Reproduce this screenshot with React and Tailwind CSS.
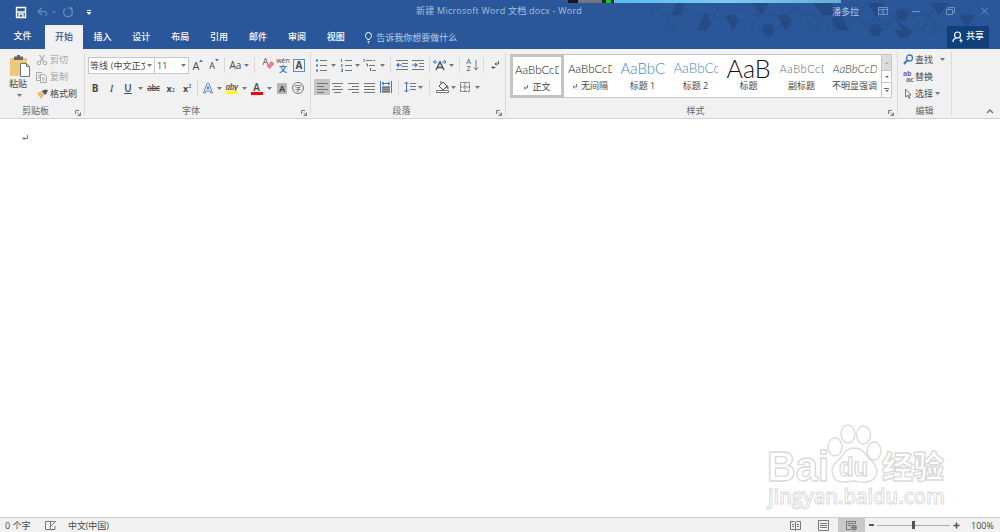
import clsx from 'clsx';

const tabs = ['插入', '设计', '布局', '引用', '邮件', '审阅', '视图'];

const styles = [
  { name: '标题 1', sample: 'AaBbC', className: 'text-[15px] text-[#4a86c0]', len: 44 },
  { name: '标题 2', sample: 'AaBbCc', className: 'text-[13.500px] text-[#4a86c0]', len: 44 },
  { name: '标题', sample: 'AaB', className: 'text-[25px] text-[#111]', len: 44 },
  { name: '副标题', sample: 'AaBbCcD', className: 'text-[11px] tracking-[0.6px] text-[#666]', len: 44 },
  { name: '不明显强调', sample: 'AaBbCcD', className: 'text-[11.500px] italic text-[#333]', len: 44 },
];

function Icon({ w = 16, h = 16, className, children }) {
  return (
    <svg
      width={w}
      height={h}
      viewBox={`0 0 ${w} ${h}`}
      className={clsx('shrink-0', className)}
      fill="none"
      stroke="#777"
      strokeWidth="1"
    >
      {children}
    </svg>
  );
}

function Slot({ className, children }) {
  return (
    <div className={clsx('flex h-4 shrink-0 items-center justify-center whitespace-nowrap', className)}>
      {children}
    </div>
  );
}

function Arrow({ className = 'w-2' }) {
  return (
    <Slot className={className}>
      <svg width="5" height="3" viewBox="0 0 5 3" className="shrink-0">
        <path d="M0 0h5L2.5 3z" fill="#777" />
      </svg>
    </Slot>
  );
}

function Sep({ className = 'w-2' }) {
  return (
    <Slot className={className}>
      <div className="h-4 w-px bg-[#d8d8d8]" />
    </Slot>
  );
}

function Group({ label, launcher, className, children }) {
  return (
    <div className={clsx('flex h-[69px] shrink-0 flex-col', className)}>
      <div className="h-[54px]">{children}</div>
      <div
        className={clsx(
          'relative flex h-[15px] items-center justify-center text-[9px] text-[#666]',
          launcher && 'pr-[13px]'
        )}
      >
        {label}
        {launcher && (
          <Icon w={6} h={6} className="absolute right-[3px] bottom-[2px]">
            <path d="M.5 4V.5H4M2.5 2.5l2.5 2.5M5.5 2.5v3h-3" />
          </Icon>
        )}
      </div>
    </div>
  );
}

function Divider() {
  return <div className="mt-[3px] h-[63px] w-px shrink-0 bg-[#dadada]" />;
}

function Lines({ d }) {
  return (
    <Icon w={12} h={12}>
      <path d={d} />
    </Icon>
  );
}

function TitlePattern() {
  return (
    <svg
      width="360"
      height="49"
      viewBox="640 0 360 49"
      className="absolute top-0 right-0"
      fill="none"
      stroke="#264f8c"
      strokeWidth="1"
    >
      <path d="M646 3l7 12 8-12M675 15h-9l9 15h-9M672 15l-6 9 4 6h8l-5-10M698 15h17l-9 15h-9l9-18M715 15l5-9M725 15l8 15 9-15M751 15h9l-9 15h9l8-8M760 15l-9-12M768 15h18l-9 15M777 3l9 12 9-9 9 9h18l9-12 9 12h18l9-12 9 12h18l9-12 9 12h18l9-12 9 12h18l9-12 9 12" />
      <path d="M804 15l9 14M822 15l-9 15-9-15M831 3l-9 12 9 15 9-15M831 30h18l9-15 9 15h18l9-15 9 15h18l9-15 9 15h18l9-15 9 15h18M849 30l-9-15M867 30l-9-15-9 15M885 30l-9-15-9 15M921 30l-9-15M939 30l-9-15-9 15" />
      <g fill="#244b84" stroke="none">
        <path d="M671 15l6-12h7l-3 12zM697 30l9-17 5 10-4 7zM725 15h17l-9 15zM752 3h17l-7 12zM777 15h18l-9 16zM813 3h18l9 12h-18zM831 19l9-4 9 15h-12zM895 30h18l-5 8h-9zM893 15l9 15h8l-8-6zM930 3h18l-9 12zM958 15l9 12 8-12zM868 3h17l-9 12z" />
        <circle cx="768.500" cy="30" r="6" />
        <circle cx="875.500" cy="30" r="6" />
        <circle cx="902" cy="15" r="6" />
      </g>
      <g fill="#2a579a">
        <circle cx="688" cy="15" r="6" />
        <circle cx="741.500" cy="15" r="6" />
        <circle cx="795" cy="15" r="6" />
        <circle cx="848" cy="15" r="6" />
        <circle cx="822" cy="30" r="6" />
        <circle cx="929" cy="30" r="6" />
        <circle cx="955" cy="15" r="6" />
      </g>
    </svg>
  );
}

function TitleBar() {
  return (
    <div className="relative flex h-[25px] items-center">
      <Icon w={100} h={25} className="stroke-[#5f86bd]">
        <path d="M16.500 7.500h9v10h-9z" stroke="#fff" strokeWidth="1.400" />
        <path d="M17 12h8M19 17v-3h4v3" stroke="#fff" strokeWidth="1.400" />
        <path d="M42 8l-4 3.500 4 3.500M38.500 11.500h5.500c3 0 3.500 3 1.500 4.500" strokeWidth="1.400" />
        <path d="M52 11.500h4l-2 2z" fill="#5f86bd" stroke="none" />
        <path d="M70.500 8.500a4.500 4.500 0 1 1-5 0M68 8h4v4" strokeWidth="1.400" />
        <path d="M87 10.500h4" stroke="#fff" />
        <path d="M86.500 12h5L89 15z" fill="#fff" stroke="none" />
      </Icon>
      <div className="-mt-[3px] ml-[316px] w-[170px] text-[9px] leading-[22px] tracking-[0.24px] whitespace-nowrap text-[#a9bfde]">
        新建 Microsoft Word 文档.docx - Word
      </div>
      <div className="-mt-[3px] ml-auto w-[46px] text-[9px] text-[#b6c9e4]">潘多拉</div>
      <Icon w={122} h={25} className="stroke-[#7292c3]">
        <path d="M.5 7.500h9v7h-9zM.5 9.500h9M5 14v-3M3.500 12.200L5 10.700l1.500 1.500" />
        <path d="M34 11.500h8M68.500 9.500h6v5h-6zM70.500 9V7.500h6v5H75M103 7.500l7 7M110 7.500l-7 7" />
      </Icon>
      {/* strip of the desktop that shows above the window */}
      <div className="absolute top-0 left-[568px] flex h-[3px] w-[273px]">
        <div className="w-[10px] bg-[#15191c]" />
        <div className="w-[24px] bg-[#73777a]" />
        <div className="w-[4px] bg-[#13301c]" />
        <div className="w-[5px] bg-[#14c828]" />
        <div className="w-[3px] bg-[#102b18]" />
        <div className="flex-1 bg-linear-to-r from-[#5bb9ee] via-[#7ccbf2] to-[#66afd0]" />
      </div>
    </div>
  );
}

function TabBar() {
  return (
    <div className="relative flex h-6 text-[9px] font-medium text-white">
      <div className="flex w-[45px] items-center justify-center pb-1">文件</div>
      <div className="flex w-[38px] items-center justify-center bg-[#f1f1f1] pb-px text-[#2a579a]">开始</div>
      {tabs.map((t) => (
        <div key={t} className="flex w-[38.900px] items-center justify-center pb-px">
          {t}
        </div>
      ))}
      <Icon w={10} h={14} className="mt-[6px] ml-[9px] stroke-white">
        <path d="M3.500 8.500C3 7 1.500 6.500 1.500 4.500a3 3 0 0 1 6 0c0 2-1.500 2.500-2 4zM3.500 10.500h2M4 12h1" />
      </Icon>
      <div className="ml-[2px] flex items-center font-normal text-[#bccde5]">告诉我你想要做什么</div>
      <div className="mt-px mr-[11px] ml-auto flex h-[22px] w-[42px] items-center gap-[3px] bg-[#103f7a] pl-[5px]">
        <Icon w={11} h={12} className="stroke-white">
          <circle cx="5.500" cy="4" r="3" strokeWidth="1.200" />
          <path d="M1 11c0-2.500 1.500-4 4-4M7.500 9.500h3M9 8v3.500M7.500 6.500l1 1" strokeWidth="1.200" />
        </Icon>
        <span className="pb-[3px]">共享</span>
      </div>
    </div>
  );
}

function Clipboard() {
  return (
    <Group label="剪贴板" launcher className="w-[84px]">
      <div className="flex">
        <div className="flex w-[36px] flex-col items-center pt-[5px]">
          <Icon w={22} h={24} className="ml-[3px]">
            <path d="M1 4h17v18H1z" fill="#edc77c" stroke="none" />
            <path d="M5 2.500h3V1h3v1.500h3V6H5z" fill="#666" stroke="none" />
            <path d="M11.500 9.500h6l3 3v10h-9z" fill="#fff" />
            <path d="M17.500 9.500v3h3" />
          </Icon>
          <div className="text-[9px] leading-[12px]">粘贴</div>
          <Arrow className="-mt-[3px] ml-[2px] w-2" />
        </div>
        <div className="flex flex-col pt-[2px] text-[9px] text-[#a6a6a6]">
          <div className="flex h-[17px] items-center">
            <Icon w={12} h={12} className="mr-[2px] stroke-[#aaa]">
              <path d="M3.500 1l4.500 7M8.500 1L4 8" strokeWidth="1.200" />
              <circle cx="3" cy="9" r="1.800" />
              <circle cx="9" cy="9" r="1.800" />
            </Icon>
            剪切
          </div>
          <div className="flex h-[17px] items-center">
            <Icon w={12} h={12} className="mr-[2px] stroke-[#aaa]">
              <path d="M4 9.500H.5v-8H6M2 4.500h2M2 6.500h2M4.500 3.500h4l2 2v6h-6zM6 7h3M6 9h3" />
            </Icon>
            复制
          </div>
          <div className="flex h-[17px] items-center text-[#444]">
            <Icon w={13} h={12} className="mr-px">
              <path d="M1 5l4-1.500L8 7l-3 4z" fill="#edb96a" stroke="none" />
              <path d="M5.500 3L9 7l1.500-1.500L12 2 9.500 1.500z" fill="#555" stroke="none" />
            </Icon>
            格式刷
          </div>
        </div>
      </div>
    </Group>
  );
}

function FontGroup() {
  return (
    <Group label="字体" launcher className="w-[225px]">
      <div className="flex pt-2 pl-[3px]">
        <div className="flex h-[17px] w-[67px] shrink-0 items-center border border-[#c6c6c6] bg-white text-[9px]">
          <div className="w-[56px] overflow-hidden pl-px tracking-[0.1px] whitespace-nowrap">等线 (中文正文)</div>
          <Arrow />
        </div>
        <div className="-ml-px flex h-[17px] w-[35px] shrink-0 items-center justify-between border border-[#c6c6c6] bg-white pr-px pl-[2px] text-[9px]">
          11
          <Arrow />
        </div>
        <Slot className="ml-px w-4 text-[11px] font-medium">
          A
          <Icon w={4} h={8} className="-mt-1">
            <path d="M0 3h4L2 .5z" fill="#3d78b8" stroke="none" />
          </Icon>
        </Slot>
        <Slot className="w-4 text-[9px] font-medium">
          A
          <Icon w={4} h={8} className="-mt-1">
            <path d="M0 0h4L2 2.500z" fill="#3d78b8" stroke="none" />
          </Icon>
        </Slot>
        <Sep className="w-[5px]" />
        <Slot className="w-[17px] text-[10px]">Aa</Slot>
        <Arrow className="w-1" />
        <Sep className="w-[13px]" />
        <Icon w={16} className="-mt-px">
          <path d="M2 9l2.500-7L7 9M3 6.500h3" />
          <path d="M5.500 10l5-5 3 3-5 5z" fill="#e8808d" stroke="none" />
        </Icon>
        <Slot className="-ml-[2px] w-4 flex-col leading-none">
          <span className="h-[7px] text-[7px] leading-[6px]">wén</span>
          <span className="text-[8px] leading-[8px] font-bold text-[#3d78b8]">文</span>
        </Slot>
        <Slot className="w-4">
          <span className="flex h-[13px] w-3 items-center justify-center border border-[#5c8cc2] text-[10px] font-bold">A</span>
        </Slot>
      </div>
      <div className="flex pt-[6px] pl-[2px] text-[9px]">
        <Slot className="w-4 text-[10px] font-bold">B</Slot>
        <Slot className="w-[17px] font-['Liberation_Serif',serif] text-[11px] italic">I</Slot>
        <Slot className="w-4 text-[10px] font-semibold underline">U</Slot>
        <Arrow className="w-[9px]" />
        <Slot className="w-[17px] text-[8px] font-semibold tracking-tighter line-through">abc</Slot>
        <Slot className="w-[17px] font-bold">
          x<span className="mt-1 text-[5px] text-[#3d78b8]">2</span>
        </Slot>
        <Slot className="w-4 font-bold">
          x<span className="-mt-1 text-[5px] text-[#3d78b8]">2</span>
        </Slot>
        <Sep className="w-[5px]" />
        <Icon w={17}>
          <path d="M3.500 13L7 3.500h2L12.500 13h-2L10 11H6l-.5 2zM7 9h2L8 6z" stroke="#5c8cc2" />
        </Icon>
        <Arrow className="w-1" />
        <Slot className="w-[21px] flex-col">
          <span className="text-[8px] leading-[9px] font-semibold tracking-tighter italic">aby</span>
          <span className="h-[3px] w-3 bg-[#ffff00]" />
        </Slot>
        <Arrow className="w-1" />
        <Slot className="w-[21px] flex-col">
          <span className="text-[10px] leading-[10px] font-semibold">A</span>
          <span className="h-[3px] w-3 bg-[#f00]" />
        </Slot>
        <Arrow className="w-1" />
        <Slot className="ml-[6px] w-[10px]">
          <span className="flex h-[11px] w-[10px] items-center justify-center bg-[#b5b5b5] font-bold">A</span>
        </Slot>
        <Slot className="w-[22px]">
          <span className="flex h-3 w-3 items-center justify-center rounded-full border border-[#777] text-[7px]">字</span>
        </Slot>
      </div>
    </Group>
  );
}

function Paragraph() {
  return (
    <Group label="段落" launcher className="w-[194px]">
      <div className="flex pt-2 pl-1">
        <Icon w={13}>
          <path d="M5 3.500h7M5 8.500h7M5 13.500h7" />
          <path d="M1 3.500h2M1 8.500h2M1 13.500h2" stroke="#3d78b8" strokeWidth="2" />
        </Icon>
        <Arrow className="w-[11px]" />
        <Icon w={14}>
          <path d="M6 3.500h7M6 8.500h7M6 13.500h7" />
          <path d="M2.500 2v3M2 7.500h1v2H2M2 12h1.500v2.500H2" stroke="#3d78b8" />
        </Icon>
        <Arrow className="w-[9px]" />
        <Icon w={15}>
          <path d="M4 3.500h9M7 8.500h6M10 13.500h4" strokeDasharray="6 1" />
          <path d="M2 2v3M4 7h1.500v2.500M8.500 11v3" stroke="#3d78b8" />
        </Icon>
        <Arrow className="w-[10px]" />
        <Sep className="w-[7px]" />
        <Icon w={16}>
          <path d="M2 3.500h12M8 6.500h6M8 9.500h6M2 12.500h12" />
          <path d="M2 8l3-2.500v2h3v1H5v2z" fill="#3d78b8" stroke="none" />
        </Icon>
        <Icon w={16}>
          <path d="M2 3.500h12M9 6.500h5M9 9.500h5M2 12.500h12" />
          <path d="M8 8L5 5.500v2H2v1h3v2z" fill="#3d78b8" stroke="none" />
        </Icon>
        <Sep className="w-[6px]" />
        <Icon w={16}>
          <path d="M4 13l4-8 4 8M5.500 10.500h5" stroke="#555" strokeWidth="1.500" />
          <path d="M1.500 5h4M3.500 3l-2 2 2 2M10 5h4M12 3l2 2-2 2" stroke="#3d78b8" />
        </Icon>
        <Arrow className="w-[6px]" />
        <Sep className="w-[10px]" />
        <Slot className="w-[9px] flex-col text-[7px] leading-[7px] font-semibold">
          <span className="text-[#3d78b8]">A</span>
          <span className="text-[#8b50b0]">Z</span>
        </Slot>
        <Icon w={8}>
          <path d="M3 3v10M1 10.500L3 13l2-2.500" />
        </Icon>
        <Sep className="w-[5px]" />
        <Icon w={16}>
          <path d="M12.500 4v3H9M10.500 5.500L9 7l1.500 1.500M9.500 10.500H6M7.500 9L6 10.500 7.500 12" stroke="#555" />
        </Icon>
      </div>
      <div className="flex pt-[6px] pl-[3px]">
        <Slot className="w-4 bg-[#c5c5c5]">
          <Lines d="M1 2.500h11M1 5.500h7M1 8.500h11M1 11.500h7" />
        </Slot>
        <Slot className="w-[16px]"><Lines d="M0 2.500h11M2 5.500h7M0 8.500h11M2 11.500h7" /></Slot>
        <Slot className="w-4"><Lines d="M0 2.500h11M4 5.500h7M0 8.500h11M4 11.500h7" /></Slot>
        <Slot className="w-4"><Lines d="M0 2.500h11M0 5.500h11M0 8.500h11M0 11.500h11" /></Slot>
        <Icon w={16}>
          <path d="M2.500 2v12M13.500 2v12M4 4.500h8M6 3L4 4.500 6 6M10 3l2 1.500L10 6" stroke="#3d78b8" />
          <path d="M4 7h8v7H4z" fill="#999" stroke="none" />
          <path d="M4 8.500h8M4 10.500h8M4 12.500h8" />
        </Icon>
        <Sep className="w-[8px]" />
        <Icon w={16}>
          <path d="M8 4.500h6M8 7.500h6M8 10.500h6" />
          <path d="M4.500 3v10M2.500 5l2-2 2 2M2.500 11l2 2 2-2" stroke="#3d78b8" />
        </Icon>
        <Arrow className="w-[5px]" />
        <Sep className="w-[12px]" />
        <Icon w={16}>
          <path d="M4 7l4-4 4 4-4 4zM6 5V2" stroke="#555" />
          <path d="M12 6l2 3-1 1-2-1z" fill="#3d78b8" stroke="none" />
          <path d="M1.500 11.500h12v2h-12z" fill="#fff" />
        </Icon>
        <Arrow className="w-1" />
        <Icon w={19}>
          <path d="M5.500 3.500h9v9h-9zM10 3.500v9M5.500 8h9" strokeDasharray="2 .5" />
        </Icon>
        <Arrow className="w-[7px]" />
      </div>
    </Group>
  );
}

function StyleSample({ text, className, len }) {
  return (
    <div className={clsx('flex h-[25px] items-center overflow-hidden font-["Lato"] font-light whitespace-nowrap', className)}>
      <span className="overflow-hidden leading-[25px]" style={{ width: len }}>
        {text}
      </span>
    </div>
  );
}

function Styles() {
  return (
    <Group label={<span className="-mr-px">样式</span>} launcher className="w-[391px]">
      <div className="flex pt-[5px] pl-1">
        <div className="flex h-11 w-[382px] border border-[#c6c6c6] bg-white">
          <div className="-mt-px -mb-px -ml-px flex w-[54px] shrink-0 flex-col items-center border-[3px] border-[#c3c3c3]">
            <StyleSample text="AaBbCcD" className="text-[11.500px] text-[#111]" len={44} />
            <div className="-mt-px flex items-center text-[9px] leading-3 whitespace-nowrap"><ReturnMark />正文</div>
          </div>
          <div className="flex w-[52px] shrink-0 flex-col items-center pt-px">
            <StyleSample text="AaBbCcD" className="text-[11.500px] text-[#111]" len={44} />
            <div className="-mt-px flex items-center text-[9px] leading-3 whitespace-nowrap"><ReturnMark />无间隔</div>
          </div>
          {styles.map((s) => (
            <div key={s.name} className="flex w-[53px] shrink-0 flex-col items-center pt-px">
              <StyleSample text={s.sample} className={s.className} len={s.len} />
              <div className="-mt-px text-[9px] leading-3 whitespace-nowrap">{s.name}</div>
            </div>
          ))}
          <div className="ml-auto flex w-[10px] shrink-0 flex-col border-l border-[#c6c6c6]">
            <div className="flex h-[15px] items-center justify-center bg-[#dcdcdc]">
              <svg width="4" height="2"><path d="M0 2h4L2 0z" fill="#aaa" /></svg>
            </div>
            <div className="flex h-[13px] items-center justify-center border-y border-[#c6c6c6]">
              <svg width="4" height="2"><path d="M0 0h4L2 2z" fill="#666" /></svg>
            </div>
            <div className="flex flex-1 flex-col items-center justify-center gap-px">
              <div className="h-px w-[5px] bg-[#666]" />
              <svg width="4" height="2"><path d="M0 0h4L2 2z" fill="#666" /></svg>
            </div>
          </div>
        </div>
      </div>
    </Group>
  );
}

function ReturnMark() {
  return (
    <Icon w={5} h={5} className="mr-1">
      <path d="M4.500 0v3H1M2.500 1.500L1 3l1.500 1.500" />
    </Icon>
  );
}

function Editing() {
  return (
    <Group label="编辑" className="w-[53px]">
      <div className="flex flex-col pt-[2px] pl-[5px] text-[9px]">
        <div className="flex h-[17px] items-center">
          <Icon w={11} h={11} className="mr-px">
            <circle cx="6.500" cy="4" r="3" stroke="#3d78b8" strokeWidth="1.300" />
            <path d="M4 6.500L1 10" stroke="#3d78b8" strokeWidth="2" />
          </Icon>
          查找
          <Arrow className="ml-1 w-[10px]" />
        </div>
        <div className="flex h-[17px] items-center">
          <div className="mr-px flex w-[11px] flex-col text-[7px] leading-[6px] font-bold tracking-tighter">
            <span className="text-[#8b50b0]">ab</span>
            <span className="pl-[3px] text-[#3d78b8]">ac</span>
          </div>
          替换
        </div>
        <div className="flex h-[16px] items-center">
          <Icon w={11} h={11} className="mr-px">
            <path d="M2.500 1v8l2-1.500L6 10.500l1-.5-1.300-3H8z" />
          </Icon>
          选择
          <Arrow className="w-[9px]" />
        </div>
      </div>
    </Group>
  );
}

function Watermark() {
  return (
    <svg
      width="190"
      height="92"
      viewBox="760 418 190 92"
      className="absolute right-[50px] bottom-[7px] font-['Liberation_Sans','Noto_Sans_CJK_SC',sans-serif]"
      fill="#fff"
      stroke="#dadada"
      strokeWidth="1.400"
    >
      <text x="767" y="480.500" fontSize="42" fontWeight="bold" textLength="62" lengthAdjust="spacingAndGlyphs">Bai</text>
      <ellipse cx="835" cy="447" rx="7" ry="9" />
      <ellipse cx="848" cy="434" rx="7" ry="9" />
      <ellipse cx="863.500" cy="435" rx="7" ry="9" />
      <ellipse cx="874" cy="451" rx="7" ry="9" />
      <path d="M854 448c-7 0-10 5-13 9s-10 8-9 15 6 10 11 10 7-1 11-1 8 2 13 1 10-4 10-11-6-10-10-15-6-8-13-8z" />
      <text x="839" y="476" fontSize="25" fontWeight="bold" textLength="29" lengthAdjust="spacingAndGlyphs">du</text>
      <text x="882" y="478" fontSize="31" fontWeight="900" textLength="62">经验</text>
      <text
        x="768"
        y="504"
        fontSize="21"
        fontWeight="600"
        strokeWidth="1"
        className="font-['Open_Sans',sans-serif]"
        textLength="177"
        lengthAdjust="spacingAndGlyphs"
      >
        jingyan.baidu.com
      </text>
    </svg>
  );
}

function StatusBar() {
  return (
    <div className="flex h-[15px] shrink-0 items-center border-t border-[#d0d0d0] bg-[#f1f1f1] pl-[5px] text-[9px]">
      <div className="w-[40px]">0 个字</div>
      <Icon w={12} h={11} className="mr-[11px]">
        <path d="M5.500 9.500h-5v-8h5v8l1 1M5.500 1.500h4M10 6v3.500H5.500M5 7l6-6" />
      </Icon>
      <div className="tracking-[-0.1px]">中文(中国)</div>
      <Icon w={11} h={11} className="mr-[17px] ml-auto">
        <path d="M.5 1.500h4l1 1 1-1h4v8h-4l-1 1-1-1h-4zM5.500 2v8M2 4.500h2M2 6.500h2M7 4.500h2M7 6.500h2" />
      </Icon>
      <Icon w={11} h={11} className="mr-[9px]">
        <path d="M.5 .5h10v10H.5zM2 3.500h7M2 5.500h7M2 7.500h7" />
      </Icon>
      <div className="flex h-[14px] w-[27px] items-center justify-center bg-[#c8c8c8]">
        <Icon w={12} h={11}>
          <path d="M5 9.500H.5v-8h9V4M2 3.500h6M2 5.500h3" />
          <circle cx="8" cy="7.500" r="2.500" fill="#999" />
          <path d="M6 7.500h4" />
        </Icon>
      </div>
      <div className="ml-1 h-[1.500px] w-[5px] bg-[#555]" />
      <div className="ml-[3px] flex h-px w-[73px] items-center justify-center bg-[#aaa]">
        <div className="h-2 w-[3px] shrink-0 bg-[#555]" />
      </div>
      <Icon w={7} h={7} className="ml-[3px] stroke-[#555]">
        <path d="M.5 3.500h6M3.500 .5v6" strokeWidth="1.500" />
      </Icon>
      <div className="ml-[11px] w-[29px]">100%</div>
    </div>
  );
}

export default function App() {
  return (
    <div className="flex h-[532px] w-[1000px] flex-col overflow-hidden bg-white font-['Open_Sans','Noto_Sans_CJK_SC',sans-serif] leading-none text-[#484848]">
      <header className="relative h-[49px] shrink-0 bg-[#2a579a]">
        <TitlePattern />
        <TitleBar />
        <TabBar />
      </header>
      <div className="relative flex h-[70px] shrink-0 border-b border-[#d2d2d2] bg-[#f1f1f1]">
        <Clipboard />
        <Divider />
        <FontGroup />
        <Divider />
        <Paragraph />
        <Divider />
        <Styles />
        <Divider />
        <Editing />
        <Divider />
        <Icon w={8} h={5} className="mt-auto mr-[6px] mb-1 ml-auto">
          <path d="M1 4l3-3 3 3" strokeWidth="1.500" />
        </Icon>
      </div>
      <main className="relative flex-1 pt-4 pl-[22px]">
        <Icon w={6} h={6}>
          <path d="M5.500 0v3.500H1M2.500 2L1 3.500 2.500 5" />
        </Icon>
        <Watermark />
      </main>
      <StatusBar />
    </div>
  );
}
